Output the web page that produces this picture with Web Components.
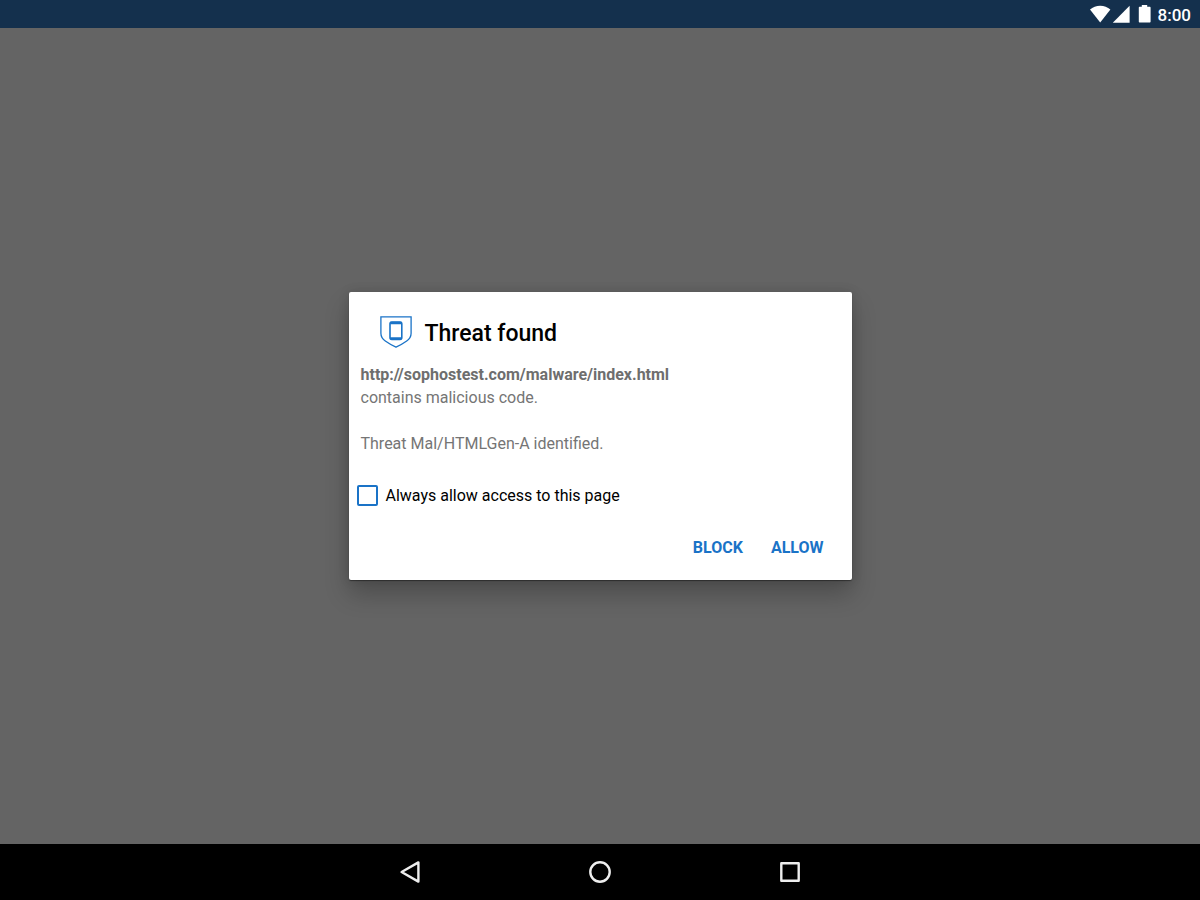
<!DOCTYPE html>
<html lang="en">
<head>
  <meta charset="utf-8">
  <meta name="viewport" content="width=device-width, initial-scale=1">
  <title>Threat found</title>
  <style>
    html, body { height: 100%; margin: 0; }
    body { font-family: Roboto, "Liberation Sans", sans-serif; }
  </style>
</head>
<body>
  <device-screen>
    <status-bar slot="status" time="8:00"></status-bar>
    <alert-dialog heading="Threat found">
      <shield-icon slot="icon"></shield-icon>
      <threat-message url="http://sophostest.com/malware/index.html" threat="Mal/HTMLGen-A"></threat-message>
      <check-option slot="option">Always allow access to this page</check-option>
      <dialog-button slot="actions">BLOCK</dialog-button>
      <dialog-button slot="actions">ALLOW</dialog-button>
    </alert-dialog>
    <nav-bar slot="nav"></nav-bar>
  </device-screen>

  <script>
    (() => {
      const COLOR__ACCENT = '#1a73c7';
      const COLOR__SCRIM = '#646464';
      const COLOR__STATUS = '#14304d';
      const COLOR__NAV_ICON = '#eee';

      class BaseElement extends HTMLElement {
        constructor() {
          super();
          this.attachShadow({ mode: 'open' });
        }

        connectedCallback() {
          this.shadowRoot.innerHTML = `
            <style>
              *, *::before, *::after { box-sizing: border-box; }
              ${this.styles}
            </style>
            ${this.markup}
          `;
        }
      }

      class DeviceScreen extends BaseElement {
        get styles() {
          return `
            :host {
              min-height: 100%;
              display: flex;
              flex-direction: column;
              background: ${COLOR__SCRIM};
            }
            main {
              flex: 1;
              display: grid;
              place-items: center;
              padding: 16px;
            }
          `;
        }
        get markup() {
          return `
            <slot name="status"></slot>
            <main><slot></slot></main>
            <slot name="nav"></slot>
          `;
        }
      }

      class StatusBar extends BaseElement {
        get time() {
          return this.getAttribute('time') || '';
        }
        get styles() {
          return `
            :host { display: block; }
            header {
              height: 28px;
              display: flex;
              align-items: center;
              justify-content: flex-end;
              padding: 0 9px;
              background: ${COLOR__STATUS};
              color: #fff;
              font-size: 17px;
              font-weight: 500;
              line-height: 28px;
            }
            svg { display: block; fill: currentColor; }
            time { padding-top: 2px; }
          `;
        }
        get markup() {
          return `
            <header>
              <svg width="68" height="28" viewBox="0 0 68 28" aria-hidden="true">
                <path d="M0 9.6C2.8 7.2 6.3 5.8 10.2 5.8S17.6 7.2 20.4 9.6L10.2 22.4z" />
                <path d="M39.6 5.8V22.7H22.8z" />
                <path d="M51.8 5h5.4v1.8h2.4c.6 0 1 .4 1 1v13.8c0 .6-.4 1-1 1H49.8c-.6 0-1-.4-1-1V7.8c0-.6.4-1 1-1h2z" />
              </svg>
              <time>${this.time}</time>
            </header>
          `;
        }
      }

      class AlertDialog extends BaseElement {
        get heading() {
          return this.getAttribute('heading') || '';
        }
        get styles() {
          return `
            :host {
              display: block;
              width: 100%;
              max-width: 503px;
            }
            section {
              padding: 24px 12px 14px;
              border-radius: 2px;
              background: #fff;
              box-shadow: 0 1px 1px rgba(0, 0, 0, 0.4), 0 14px 24px rgba(0, 0, 0, 0.24), 0 0 12px rgba(0, 0, 0, 0.12);
            }
            header {
              display: flex;
              gap: 13px;
              padding-left: 19px;
            }
            h1 {
              margin: 0;
              font-size: 23px;
              font-weight: 500;
              line-height: 36px;
              color: #000;
            }
            .message { margin-top: 11px; }
            .option { margin: 29px -4px 0; }
            footer {
              display: flex;
              justify-content: flex-end;
              gap: 12px;
              margin-top: 23px;
              padding-right: 8px;
            }
          `;
        }
        get markup() {
          return `
            <section role="alertdialog" aria-labelledby="heading">
              <header>
                <slot name="icon"></slot>
                <h1 id="heading">${this.heading}</h1>
              </header>
              <div class="message"><slot></slot></div>
              <div class="option"><slot name="option"></slot></div>
              <footer><slot name="actions"></slot></footer>
            </section>
          `;
        }
      }

      class ShieldIcon extends BaseElement {
        get styles() {
          return `
            :host { display: block; }
            svg { display: block; }
          `;
        }
        get markup() {
          return `
            <svg width="32" height="32" viewBox="0 0 32 32" fill="none" stroke="${COLOR__ACCENT}" aria-hidden="true">
              <path stroke-width="1.3" d="M.9.9h30.2v16.3c0 3.2-1.5 5.8-4.4 7.8C23.4 27.3 19.7 29.6 16 31.2 12.3 29.6 8.6 27.3 5.3 25 2.4 23 .9 20.4.9 17.2z" />
              <rect x="10" y="6" width="11.8" height="17.4" rx="1.8" stroke-width="1.6" />
              <path stroke-width="2.4" d="M10.2 7h11.4M10.2 22.4h11.4" />
            </svg>
          `;
        }
      }

      class ThreatMessage extends BaseElement {
        get url() {
          return this.getAttribute('url') || '';
        }
        get threat() {
          return this.getAttribute('threat') || '';
        }
        get styles() {
          return `
            :host {
              display: block;
              color: #757575;
              font-size: 16px;
              line-height: 23px;
            }
            p { margin: 0; overflow-wrap: anywhere; }
            p + p { margin-top: 23px; }
            strong {
              display: block;
              font-weight: 700;
              color: #6e6e6e;
            }
          `;
        }
        get markup() {
          return `
            <p><strong>${this.url}</strong>contains malicious code.</p>
            <p>Threat ${this.threat} identified.</p>
          `;
        }
      }

      class CheckOption extends BaseElement {
        get styles() {
          return `
            :host { display: block; }
            label {
              display: flex;
              align-items: center;
              gap: 8px;
              color: #000;
              font-size: 16px;
              line-height: 23px;
            }
            input {
              appearance: none;
              flex: none;
              width: 21px;
              height: 21px;
              margin: 0;
              border: 2px solid ${COLOR__ACCENT};
              border-radius: 2px;
            }
            input:checked {
              background: ${COLOR__ACCENT};
              box-shadow: inset 0 0 0 3px #fff;
            }
          `;
        }
        get markup() {
          return `
            <label for="check"><input type="checkbox" id="check"><span><slot></slot></span></label>
          `;
        }
      }

      class DialogButton extends BaseElement {
        get styles() {
          return `
            :host { display: block; }
            button {
              height: 36px;
              padding: 0 8px;
              border: 0;
              background: none;
              color: ${COLOR__ACCENT};
              font: 700 16px/36px Roboto, "Liberation Sans", sans-serif;
              cursor: pointer;
            }
          `;
        }
        get markup() {
          return `<button type="button"><slot></slot></button>`;
        }
      }

      class NavBar extends BaseElement {
        get styles() {
          return `
            :host { display: block; }
            nav {
              height: 56px;
              display: flex;
              align-items: center;
              justify-content: center;
              gap: 142px;
              background: #000;
            }
            button {
              width: 48px;
              height: 48px;
              display: grid;
              place-items: center;
              padding: 0;
              border: 0;
              background: none;
              color: ${COLOR__NAV_ICON};
            }
            svg {
              display: block;
              fill: none;
              stroke: currentColor;
              stroke-width: 2.4;
              stroke-linejoin: round;
            }
          `;
        }
        get markup() {
          return `
            <nav>
              <button type="button" aria-label="Back">
                <svg width="24" height="24" viewBox="0 0 24 24"><path d="M20.4 2.4v19.2L3.6 12z" /></svg>
              </button>
              <button type="button" aria-label="Home">
                <svg width="24" height="24" viewBox="0 0 24 24"><circle cx="12" cy="12" r="9.7" /></svg>
              </button>
              <button type="button" aria-label="Recent apps">
                <svg width="24" height="24" viewBox="0 0 24 24"><rect x="3.3" y="3.3" width="17.4" height="17.4" /></svg>
              </button>
            </nav>
          `;
        }
      }

      window.customElements.define('device-screen', DeviceScreen);
      window.customElements.define('status-bar', StatusBar);
      window.customElements.define('alert-dialog', AlertDialog);
      window.customElements.define('shield-icon', ShieldIcon);
      window.customElements.define('threat-message', ThreatMessage);
      window.customElements.define('check-option', CheckOption);
      window.customElements.define('dialog-button', DialogButton);
      window.customElements.define('nav-bar', NavBar);
    })();
  </script>
</body>
</html>
